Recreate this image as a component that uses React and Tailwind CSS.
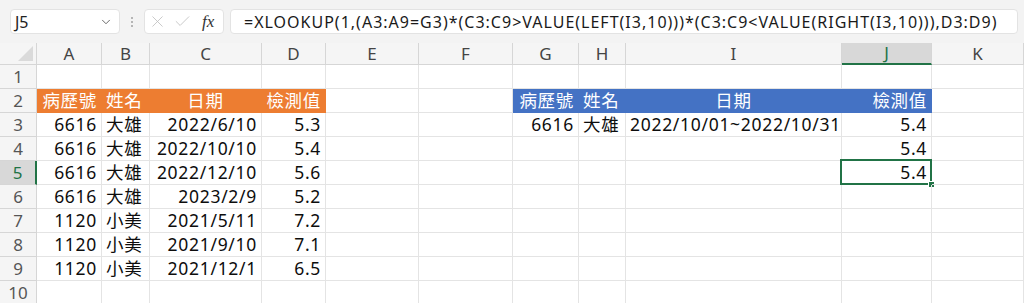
import React from 'react';
import { ChevronDown, X, Check } from 'lucide-react';

const cols = ['A', 'B', 'C', 'D', 'E', 'F', 'G', 'H', 'I', 'J', 'K'];

const orange = 'bg-[#ed7d31] border-[#ed7d31] text-white';
const blue = 'bg-[#4472c4] border-[#4472c4] text-white';

// cell: [text, align, style]
const rows = [
  {},
  {
    A: ['病歷號', 'r', orange], B: ['姓名', 'l', orange], C: ['日期', 'c', orange], D: ['檢測值', 'r', orange],
    G: ['病歷號', 'r', blue], H: ['姓名', 'l', blue], I: ['日期', 'c', blue], J: ['檢測值', 'r', blue],
  },
  { A: ['6616', 'r'], B: ['大雄', 'l'], C: ['2022/6/10', 'r'], D: ['5.3', 'r'], G: ['6616', 'r'], H: ['大雄', 'l'], I: ['2022/10/01~2022/10/31', 'l'], J: ['5.4', 'r'] },
  { A: ['6616', 'r'], B: ['大雄', 'l'], C: ['2022/10/10', 'r'], D: ['5.4', 'r'], J: ['5.4', 'r'] },
  { A: ['6616', 'r'], B: ['大雄', 'l'], C: ['2022/12/10', 'r'], D: ['5.6', 'r'], J: ['5.4', 'r'] },
  { A: ['6616', 'r'], B: ['大雄', 'l'], C: ['2023/2/9', 'r'], D: ['5.2', 'r'] },
  { A: ['1120', 'r'], B: ['小美', 'l'], C: ['2021/5/11', 'r'], D: ['7.2', 'r'] },
  { A: ['1120', 'r'], B: ['小美', 'l'], C: ['2021/9/10', 'r'], D: ['7.1', 'r'] },
  { A: ['1120', 'r'], B: ['小美', 'l'], C: ['2021/12/1', 'r'], D: ['6.5', 'r'] },
  {},
];

const alignClass = { r: 'justify-end', l: 'justify-start', c: 'justify-center' };

const font = { fontFamily: '"Noto Sans", "Noto Sans CJK TC", sans-serif' };

function FormulaBar() {
  return (
    <div className="h-[43px] bg-[#f3f3f3] flex items-center pl-[10px] pr-[6px] gap-0">
      <div className="w-[110px] h-[25px] bg-white rounded-[4px] border border-[#e3e3e3] flex items-center justify-between pl-[4px] pr-[6px]">
        <span className="text-[16px] text-[#222]">J5</span>
        <ChevronDown size={14} strokeWidth={1.5} className="text-[#555]" />
      </div>
      <div className="w-[24px] flex flex-col items-center gap-[2px]">
        <span className="w-[2px] h-[2px] rounded-full bg-[#a0a0a0]" />
        <span className="w-[2px] h-[2px] rounded-full bg-[#a0a0a0]" />
        <span className="w-[2px] h-[2px] rounded-full bg-[#a0a0a0]" />
      </div>
      <div className="w-[80px] h-[25px] bg-white rounded-[4px] border border-[#e3e3e3] flex items-center pl-[3px] gap-[6px]">
        <X size={19} strokeWidth={1} className="text-[#bcbcbc]" />
        <Check size={19} strokeWidth={1} className="text-[#bcbcbc]" />
        <span className="text-[17px] italic text-[#333] ml-[4px]" style={{ fontFamily: '"Liberation Serif", serif' }}>fx</span>
      </div>
      <div className="ml-[6px] flex-1 h-[25px] bg-white rounded-[4px] border border-[#e3e3e3] flex items-center pl-[13px]">
        <span className="text-[16px] text-[#1a1a1a] whitespace-nowrap tracking-[1px]">
          =XLOOKUP(1,(A3:A9=G3)*(C3:C9&gt;VALUE(LEFT(I3,10)))*(C3:C9&lt;VALUE(RIGHT(I3,10))),D3:D9)
        </span>
      </div>
    </div>
  );
}

export default function App() {
  return (
    <div className="w-[1024px] h-[303px] overflow-hidden bg-white" style={font}>
      <FormulaBar />
      <div className="grid grid-cols-[37px_65px_48px_112px_64px_93px_94px_66px_47px_216px_90px_92px] grid-rows-[22px_repeat(10,24px)]">
        <div className="relative bg-[#f5f5f5] border-r border-b border-[#d6d6d6]">
          <div className="absolute right-[3px] bottom-[3px] w-0 h-0 border-l-[15px] border-l-transparent border-b-[15px] border-b-[#dadada]" />
        </div>
        {cols.map((c) =>
          c === 'J' ? (
            <div key={c} className="bg-[#d8d8d8] border-r border-[#d6d6d6] border-b-2 border-b-[#217346] flex items-center justify-center text-[17px] text-[#217346]">
              {c}
            </div>
          ) : (
            <div key={c} className="bg-[#f5f5f5] border-r border-b border-[#d6d6d6] flex items-center justify-center text-[17px] text-[#444]">
              {c}
            </div>
          )
        )}
        {rows.map((row, i) => (
          <React.Fragment key={i}>
            {i === 4 ? (
              <div className="bg-[#d8d8d8] border-r-2 border-r-[#217346] border-b border-[#d6d6d6] flex items-center justify-center text-[17px] text-[#217346]">
                {i + 1}
              </div>
            ) : (
              <div className="bg-[#f5f5f5] border-r border-b border-[#d6d6d6] flex items-center justify-center text-[17px] text-[#555]">
                {i + 1}
              </div>
            )}
            {cols.map((c) => {
              const cell = row[c];
              const style = cell && cell[2] ? cell[2] : 'border-[#e4e4e4] text-[#0d0d0d]';
              const selected = i === 4 && c === 'J';
              return (
                <div
                  key={c}
                  className={`relative border-r border-b flex items-center px-[4px] text-[17.5px] tracking-[0.7px] whitespace-nowrap ${style} ${cell ? alignClass[cell[1]] : ''}`}
                >
                  {cell ? cell[0] : ''}
                  {selected && (
                    <>
                      <div className="absolute left-[-2px] top-[-2px] right-[-1px] bottom-[-1px] border-2 border-[#217346]" />
                      <div className="absolute right-[-4px] bottom-[-4px] w-[7px] h-[7px] bg-[#217346] border border-white" />
                    </>
                  )}
                </div>
              );
            })}
          </React.Fragment>
        ))}
      </div>
    </div>
  );
}
